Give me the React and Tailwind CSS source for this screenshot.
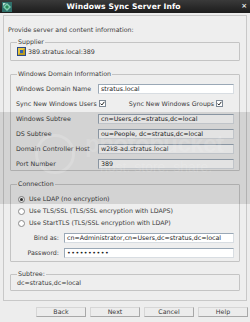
import React from "react";

const font = { fontFamily: '"DejaVu Sans", Verdana, sans-serif' };

function Field({ label, value, labelW = "w-[82px]" }) {
  return (
    <div className="flex items-center h-[15px]">
      <div className={`${labelW} shrink-0 text-[#3a3a3a]`}>{label}</div>
      <div className="flex-1 h-[10px] bg-white border border-[#9aa8b6] border-b-[#d8dde2] border-r-[#d8dde2] flex items-center pl-[2px] text-[#222] leading-none">
        {value}
      </div>
    </div>
  );
}

function Check() {
  return (
    <span className="inline-flex w-[7px] h-[7px] bg-white border border-[#7d8894] items-center justify-center ml-[2px]">
      <svg width="5" height="5" viewBox="0 0 5 5">
        <path d="M0.6 2.6 L1.9 4 L4.4 0.8" stroke="#222" strokeWidth="1" fill="none" />
      </svg>
    </span>
  );
}

function Radio({ on, children }) {
  return (
    <div className="flex items-center h-[12px]">
      <span className="w-[7px] h-[7px] rounded-full border border-[#8a8a8a] bg-white flex items-center justify-center mr-[4px]">
        {on && <span className="w-[3px] h-[3px] rounded-full bg-[#333]" />}
      </span>
      <span className="text-[#3a3a3a]">{children}</span>
    </div>
  );
}

function Box({ legend, className = "", children }) {
  return (
    <fieldset className={`border border-[#c4c4c4] rounded-[1px] mx-[6px] px-[5px] ${className}`}>
      <legend className="px-[1px] ml-[1px] text-[#3a3a3a] leading-[8px]">{legend}</legend>
      {children}
    </fieldset>
  );
}

function Btn({ children }) {
  return (
    <div className="w-[50px] h-[10px] flex items-center justify-center bg-[#ececec] border border-[#d6d6d6] border-r-[#a8a8a8] border-b-[#a8a8a8] text-[#3a3a3a]">
      {children}
    </div>
  );
}

export default function App() {
  return (
    <div
      className="relative w-[250px] h-[322px] bg-[#ededed] overflow-hidden text-[6.3px] leading-none"
      style={font}
    >
      {/* title bar */}
      <div className="h-[13px] bg-gradient-to-b from-[#3a3a3a] to-[#1c1c1c] flex items-center relative">
        <svg className="ml-[2px]" width="10" height="10" viewBox="0 0 10 10">
          <rect x="0" y="0" width="10" height="10" fill="#2f6f6a" />
          <path d="M1 5 L5 1 L9 5 L5 9 Z" fill="#7fd0b0" />
          <path d="M3 5 L5 3 L7 5 L5 7 Z" fill="#2a8a5a" />
          <path d="M1 1 L4 1 L1 4 Z" fill="#b8e0d0" />
        </svg>
        <div className="flex-1 text-center text-white font-bold text-[7.6px] tracking-[0.1px] pr-[6px]">
          Windows Sync Server Info
        </div>
        <div className="text-[#e8e8e8] text-[7px] font-bold mr-[3px]">×</div>
      </div>

      {/* main panel */}
      <div className="mx-[3px] mt-[2px] h-[286px] border border-[#c8c8c8] bg-[#eeeeee] flex flex-col">
        <div className="ml-[4px] mt-[11px] text-[#3a3a3a]">Provide server and content information:</div>

        <Box legend="Supplier" className="mt-[5px] h-[23px]">
          <div className="flex items-center h-[11px] ml-[1px]">
            <svg width="9" height="9" viewBox="0 0 9 9" className="mr-[2px]">
              <rect x="0" y="0" width="9" height="9" fill="#2a4a8a" />
              <rect x="1" y="1" width="7" height="7" fill="#e8c640" />
              <path d="M1 8 L8 1 L8 8 Z" fill="#b89a20" />
              <rect x="3" y="3" width="3" height="3" fill="#3060b0" />
            </svg>
            <span className="text-[#333]">389.stratus.local:389</span>
          </div>
        </Box>

        <Box legend="Windows Domain Information" className="mt-[9px] h-[101px]">
          <div className="flex flex-col mt-[3px]">
            <Field label="Windows Domain Name" value="stratus.local" />
            <div className="flex items-center h-[15px] text-[#3a3a3a]">
              <span>Sync New Windows Users</span>
              <Check />
              <span className="ml-[23px]">Sync New Windows Groups</span>
              <Check />
            </div>
            <Field label="Windows Subtree" value="cn=Users,dc=stratus,dc=local" />
            <Field label="DS Subtree" value="ou=People, dc=stratus,dc=local" />
            <Field label="Domain Controller Host" value="w2k8-ad.stratus.local" />
            <Field label="Port Number" value="389" />
          </div>
        </Box>

        <Box legend="Connection" className="mt-[9px] h-[82px]">
          <div className="flex flex-col pl-[2px] mt-[5px]">
            <Radio on>Use LDAP (no encryption)</Radio>
            <Radio>Use TLS/SSL (TLS/SSL encryption with LDAPS)</Radio>
            <Radio>Use StartTLS (TLS/SSL encryption with LDAP)</Radio>
            <div className="pl-[8px] mt-[1px]">
              <Field label={<span className="block text-right pr-[5px]">Bind as:</span>} labelW="w-[38px]" value="cn=Administrator,cn=Users,dc=stratus,dc=local" />
              <Field label={<span className="block text-right pr-[5px]">Password:</span>} labelW="w-[38px]" value={<span className="tracking-[0.5px]">••••••••••</span>} />
            </div>
          </div>
        </Box>

        <Box legend="Subtree:" className="mt-[8px] h-[21px]">
          <div className="flex items-center h-[10px] text-[#3a3a3a] ml-[1px]">dc=stratus,dc=local</div>
        </Box>
      </div>

      {/* buttons */}
      <div className="flex justify-end gap-[4px] mt-[6px] mr-[2px]">
        <Btn>Back</Btn>
        <Btn>Next</Btn>
        <Btn>Cancel</Btn>
        <Btn>Help</Btn>
      </div>

      {/* watermark overlay */}
      <div className="absolute left-0 right-0 top-[112px] h-[92px] bg-[rgba(0,0,0,0.11)] pointer-events-none">
        <div className="absolute left-[35px] top-[22px] w-[40px] h-[40px] rounded-full border-[3px] border-[rgba(255,255,255,0.16)]" />
        <div className="absolute left-[85px] top-[20px] text-[24px] font-bold text-[rgba(255,255,255,0.14)] tracking-[-0.5px]" style={{ fontFamily: '"Liberation Sans", Arial, sans-serif' }}>
          photobucket
        </div>
        <div className="absolute left-[100px] top-[48px] text-[14px] text-[rgba(255,255,255,0.14)]" style={{ fontFamily: '"Liberation Sans", Arial, sans-serif' }}>
          host. store. share.
        </div>
      </div>
    </div>
  );
}
